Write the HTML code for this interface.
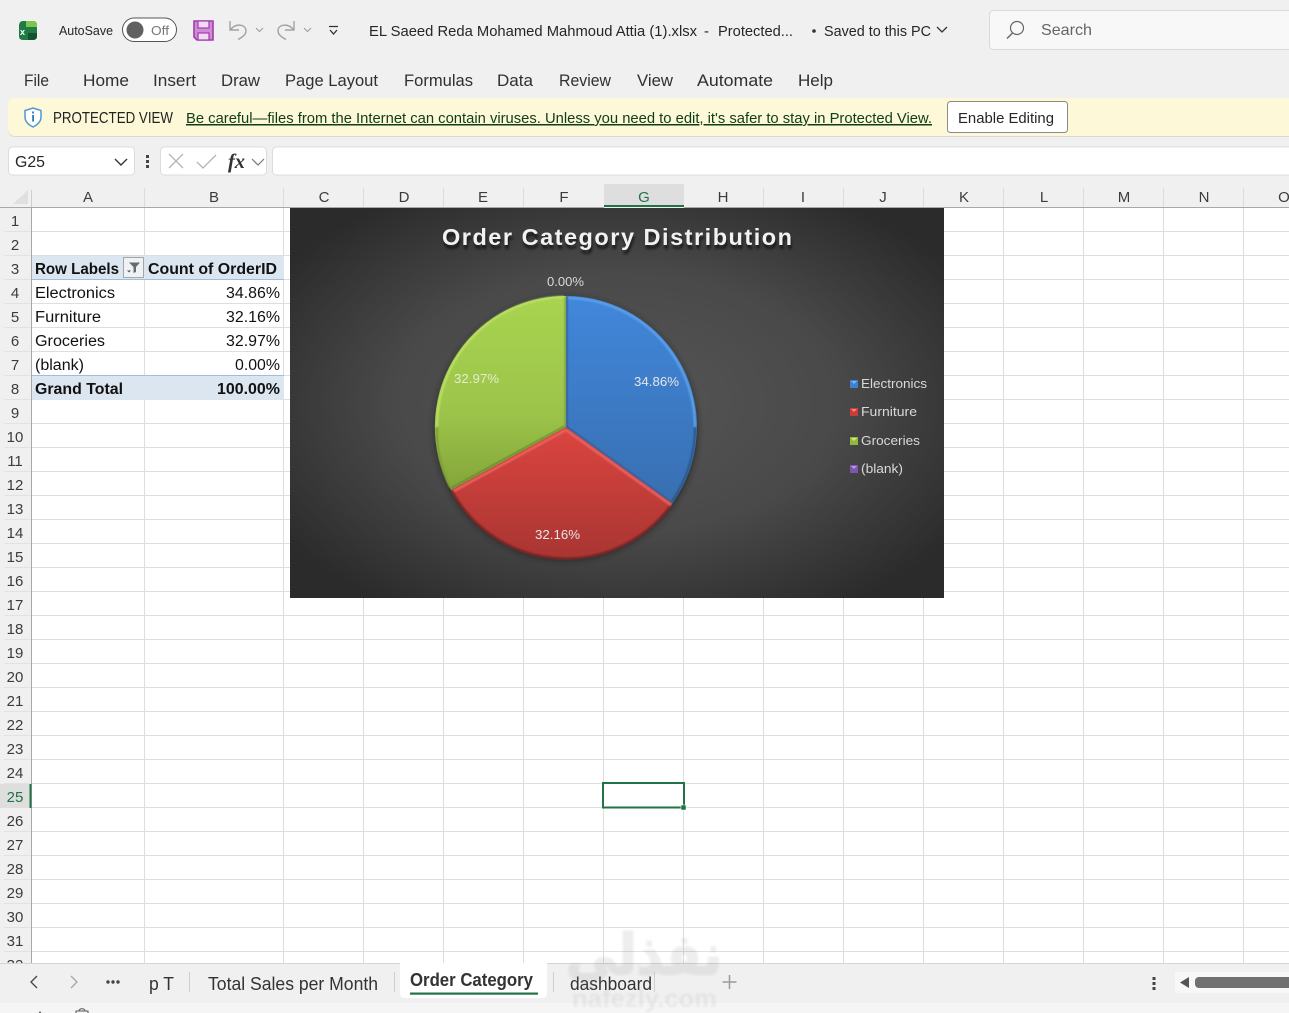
<!DOCTYPE html>
<html><head><meta charset="utf-8"><style>
html,body{margin:0;padding:0;background:#f0f0f0;overflow:hidden}
svg{display:block;position:absolute;left:0;top:0}
text{font-family:"Liberation Sans","DejaVu Sans",sans-serif;fill:#262626}
.m{font-size:17px;fill:#303030}
.c{font-size:15.5px;fill:#111}
.b{font-size:15.5px;font-weight:bold;fill:#111}
.r{font-size:15px;fill:#3c3c3c;text-anchor:middle}
.h{font-size:15px;fill:#3c3c3c;text-anchor:middle}
.t{font-size:13px;fill:#e6e6e6}
.g{stroke:#dedede;stroke-width:1}
</style></head><body>
<svg width="1289" height="1013" viewBox="0 0 1289 1013" xmlns="http://www.w3.org/2000/svg">
<defs>
<radialGradient id="bg" cx="50%" cy="50%" r="62%"><stop offset="0" stop-color="#565656"/><stop offset=".55" stop-color="#494949"/><stop offset="1" stop-color="#2b2b2b"/></radialGradient>
<linearGradient id="bl" x1="0" y1="0" x2="0" y2="1"><stop offset="0" stop-color="#4187dc"/><stop offset="1" stop-color="#386fb0"/></linearGradient>
<linearGradient id="rd" x1="0" y1="0" x2="0" y2="1"><stop offset="0" stop-color="#dc4540"/><stop offset="1" stop-color="#a93532"/></linearGradient>
<linearGradient id="gr" x1="0" y1="0" x2="0" y2="1"><stop offset="0" stop-color="#a8d450"/><stop offset=".6" stop-color="#9cc44a"/><stop offset="1" stop-color="#84a53a"/></linearGradient>
<filter id="sh" x="-20%" y="-20%" width="140%" height="140%"><feGaussianBlur stdDeviation="3"/></filter>
<filter id="ts" x="-5%" y="-30%" width="110%" height="160%"><feGaussianBlur stdDeviation="1.2"/></filter>
<filter id="wb" x="-5%" y="-20%" width="110%" height="140%"><feGaussianBlur stdDeviation="1"/></filter>
<filter id="bv" x="-10%" y="-10%" width="120%" height="120%"><feGaussianBlur stdDeviation=".7"/></filter>
</defs>

<!-- sheet -->
<rect x="0" y="0" width="1289" height="1013" fill="#f0f0f0"/>
<rect x="32" y="208" width="1257" height="755" fill="#fff"/>
<g class="g">
<path d="M32 231.5H1289M32 255.5H1289M32 279.5H1289M32 303.5H1289M32 327.5H1289M32 351.5H1289M32 375.5H1289M32 399.5H1289M32 423.5H1289M32 447.5H1289M32 471.5H1289M32 495.5H1289M32 519.5H1289M32 543.5H1289M32 567.5H1289M32 591.5H1289M32 615.5H1289M32 639.5H1289M32 663.5H1289M32 687.5H1289M32 711.5H1289M32 735.5H1289M32 759.5H1289M32 783.5H1289M32 807.5H1289M32 831.5H1289M32 855.5H1289M32 879.5H1289M32 903.5H1289M32 927.5H1289M32 951.5H1289"/>
<path d="M144.5 208V963M283.5 208V963M363.5 208V963M443.5 208V963M523.5 208V963M603.5 208V963M683.5 208V963M763.5 208V963M843.5 208V963M923.5 208V963M1003.5 208V963M1083.5 208V963M1163.5 208V963M1243.5 208V963"/>
</g>

<!-- col header -->
<rect x="0" y="184" width="1289" height="23" fill="#f0f0f0"/>
<rect x="604" y="184" width="80" height="23" fill="#dedede"/>
<rect x="604" y="205" width="80" height="2" fill="#217346"/>
<path d="M0 207.5H604M684 207.5H1289" stroke="#a8a8a8"/>
<path d="M31.5 190V207" stroke="#cfcfcf"/>
<path d="M31.5 207V963" stroke="#a8a8a8"/>
<path d="M144.5 188V207M283.5 188V207M363.5 188V207M443.5 188V207M523.5 188V207M763.5 188V207M843.5 188V207M923.5 188V207M1003.5 188V207M1083.5 188V207M1163.5 188V207M1243.5 188V207" stroke="#dcdcdc"/>
<path d="M13 204L28 190V204Z" fill="#e0e0e0"/>
<g class="h">
<text class="h" x="88" y="202">A</text><text class="h" x="214" y="202">B</text><text class="h" x="324" y="202">C</text><text class="h" x="404" y="202">D</text><text class="h" x="483" y="202">E</text><text class="h" x="564" y="202">F</text><text class="h" x="644" y="202" style="fill:#217346">G</text><text class="h" x="723" y="202">H</text><text class="h" x="803" y="202">I</text><text class="h" x="883" y="202">J</text><text class="h" x="964" y="202">K</text><text class="h" x="1044" y="202">L</text><text class="h" x="1124" y="202">M</text><text class="h" x="1204" y="202">N</text><text class="h" x="1284" y="202">O</text>
</g>

<!-- row headers -->
<path d="M4 231.5H31M4 255.5H31M4 279.5H31M4 303.5H31M4 327.5H31M4 351.5H31M4 375.5H31M4 399.5H31M4 423.5H31M4 447.5H31M4 471.5H31M4 495.5H31M4 519.5H31M4 543.5H31M4 567.5H31M4 591.5H31M4 615.5H31M4 639.5H31M4 663.5H31M4 687.5H31M4 711.5H31M4 735.5H31M4 759.5H31M4 783.5H31M4 807.5H31M4 831.5H31M4 855.5H31M4 879.5H31M4 903.5H31M4 927.5H31M4 951.5H31" stroke="#e2e2e2"/>
<rect x="0" y="784" width="30" height="24" fill="#dedede"/>
<rect x="29.500" y="784" width="2" height="24" fill="#217346"/>
<text class="r" x="15" y="226">1</text><text class="r" x="15" y="250">2</text><text class="r" x="15" y="274">3</text><text class="r" x="15" y="298">4</text><text class="r" x="15" y="322">5</text><text class="r" x="15" y="346">6</text><text class="r" x="15" y="370">7</text><text class="r" x="15" y="394">8</text><text class="r" x="15" y="418">9</text><text class="r" x="15" y="442">10</text><text class="r" x="15" y="466">11</text><text class="r" x="15" y="490">12</text><text class="r" x="15" y="514">13</text><text class="r" x="15" y="538">14</text><text class="r" x="15" y="562">15</text><text class="r" x="15" y="586">16</text><text class="r" x="15" y="610">17</text><text class="r" x="15" y="634">18</text><text class="r" x="15" y="658">19</text><text class="r" x="15" y="682">20</text><text class="r" x="15" y="706">21</text><text class="r" x="15" y="730">22</text><text class="r" x="15" y="754">23</text><text class="r" x="15" y="778">24</text><text class="r" x="15" y="802" style="fill:#217346">25</text><text class="r" x="15" y="826">26</text><text class="r" x="15" y="850">27</text><text class="r" x="15" y="874">28</text><text class="r" x="15" y="898">29</text><text class="r" x="15" y="922">30</text><text class="r" x="15" y="946">31</text><text class="r" x="15" y="970">32</text>

<!-- pivot -->
<rect x="32" y="256" width="252" height="23" fill="#dce6f1"/>
<path d="M32 279.500H284" stroke="#a3bcd9"/>
<rect x="32" y="376" width="252" height="24" fill="#dce6f1"/>
<path d="M32 375.500H284" stroke="#a3bcd9"/>
<rect x="123.500" y="257.500" width="20" height="20" fill="#eef1f5" stroke="#a6a6a6"/>
<path d="M129 262.500H140L136 267V272L133.500 273V267Z" fill="#6a6a6a"/>
<path d="M127 270.500H131L129 272.500Z" fill="#555"/>
<text class="b" x="35" y="274" textLength="84" lengthAdjust="spacingAndGlyphs">Row Labels</text>
<text class="b" x="148" y="274" textLength="129" lengthAdjust="spacingAndGlyphs">Count of OrderID</text>
<text class="c" x="35" y="298" textLength="80" lengthAdjust="spacingAndGlyphs">Electronics</text>
<text class="c" x="35" y="322" textLength="66" lengthAdjust="spacingAndGlyphs">Furniture</text>
<text class="c" x="35" y="346" textLength="70" lengthAdjust="spacingAndGlyphs">Groceries</text>
<text class="c" x="35" y="370" textLength="49" lengthAdjust="spacingAndGlyphs">(blank)</text>
<text class="b" x="35" y="394" textLength="88" lengthAdjust="spacingAndGlyphs">Grand Total</text>
<text class="c" x="226" y="298" textLength="54" lengthAdjust="spacingAndGlyphs">34.86%</text>
<text class="c" x="226" y="322" textLength="54" lengthAdjust="spacingAndGlyphs">32.16%</text>
<text class="c" x="226" y="346" textLength="54" lengthAdjust="spacingAndGlyphs">32.97%</text>
<text class="c" x="235" y="370" textLength="45" lengthAdjust="spacingAndGlyphs">0.00%</text>
<text class="b" x="217" y="394" textLength="63" lengthAdjust="spacingAndGlyphs">100.00%</text>

<!-- chart -->
<rect x="290" y="208" width="654" height="390" fill="url(#bg)"/>
<text x="442" y="247" font-size="23.500" font-weight="bold" textLength="350" lengthAdjust="spacing" style="fill:#000;opacity:.6" filter="url(#ts)" transform="translate(1 2)">Order Category Distribution</text>
<text x="442" y="245" font-size="23.500" font-weight="bold" textLength="350" lengthAdjust="spacing" style="fill:#f2f2f2">Order Category Distribution</text>
<circle cx="566" cy="429" r="132" fill="#222" opacity=".7" filter="url(#sh)"/>
<path d="M566 427L566 296A131 131 0 0 1 672.6 503Z" fill="url(#bl)"/>
<path d="M566 427L672.6 503A131 131 0 0 1 451 490Z" fill="url(#rd)"/>
<path d="M566 427L451 490A131 131 0 0 1 566 296Z" fill="url(#gr)"/>
<!-- bevels -->
<g filter="url(#bv)">
<path d="M568 298A129 129 0 0 1 695 427" fill="none" stroke="#5b9fe8" stroke-width="2.500"/>
<path d="M695 427A129 129 0 0 1 672 501" fill="none" stroke="#2a5484" stroke-width="2"/>
<path d="M567 296V427L672.600 503" fill="none" stroke="#2e5c93" stroke-width="1.500"/>
<path d="M671 505A130 130 0 0 1 452 491" fill="none" stroke="#7f2725" stroke-width="2.500"/>
<path d="M566 430L671 505M566 430L454 491" fill="none" stroke="#e8625c" stroke-width="2.500"/>
<path d="M564 297A129 129 0 0 0 437 427" fill="none" stroke="#b8df62" stroke-width="2.500"/>
<path d="M437 427A129 129 0 0 0 450 487" fill="none" stroke="#7d9c35" stroke-width="2"/>
<path d="M565 297V426" fill="none" stroke="#7f9f38" stroke-width="1.200"/>
<path d="M451 488L565 426" fill="none" stroke="#5f7c28" stroke-width="1.200"/>
</g>
<text class="t" x="547" y="286" textLength="37" lengthAdjust="spacingAndGlyphs" style="fill:#d9d9d9">0.00%</text>
<text class="t" x="634" y="386" textLength="45" lengthAdjust="spacingAndGlyphs">34.86%</text>
<text class="t" x="535" y="539" textLength="45" lengthAdjust="spacingAndGlyphs">32.16%</text>
<text class="t" x="454" y="383" textLength="45" lengthAdjust="spacingAndGlyphs" style="fill:#e3edcc">32.97%</text>
<rect x="850" y="380" width="8" height="8" fill="#3f80d0"/><path d="M851 381h6l-3 3z" fill="#7fb4ee"/>
<rect x="850" y="408" width="8" height="8" fill="#c93c38"/><path d="M851 409h6l-3 3z" fill="#ee8884"/>
<rect x="850" y="437" width="8" height="8" fill="#93b83f"/><path d="M851 438h6l-3 3z" fill="#cfe68e"/>
<rect x="850" y="465" width="8" height="8" fill="#7b55b0"/><path d="M851 466h6l-3 3z" fill="#b49ad8"/>
<text class="t" x="861" y="388" textLength="66" lengthAdjust="spacingAndGlyphs" style="fill:#d9d9d9">Electronics</text>
<text class="t" x="861" y="416" textLength="56" lengthAdjust="spacingAndGlyphs" style="fill:#d9d9d9">Furniture</text>
<text class="t" x="861" y="445" textLength="59" lengthAdjust="spacingAndGlyphs" style="fill:#d9d9d9">Groceries</text>
<text class="t" x="861" y="473" textLength="42" lengthAdjust="spacingAndGlyphs" style="fill:#d9d9d9">(blank)</text>

<!-- selection -->
<rect x="603" y="783" width="81" height="24.500" fill="none" stroke="#217346" stroke-width="2"/>
<rect x="681" y="805" width="5" height="5" fill="#217346" stroke="#fff" stroke-width=".5"/>

<!-- title bar -->
<path d="M19 26Q19 21 23 21H33Q37 21 37 25V36Q37 40 33 40H23Q19 40 19 36Z" fill="#1f7a45"/>
<path d="M26 21H33Q37 21 37 25V27H26Z" fill="#7bc74d"/>
<path d="M28 33H37V36Q37 40 33 40H28Z" fill="#14522f"/>
<text x="20" y="35" font-size="9" font-weight="bold" style="fill:#fff">x</text>
<text x="59" y="35" font-size="12.500" textLength="54" lengthAdjust="spacingAndGlyphs">AutoSave</text>
<rect x="122.500" y="18" width="54" height="23.500" rx="11.700" fill="#fff" stroke="#555"/>
<circle cx="135" cy="30" r="8.500" fill="#616161"/>
<text x="151" y="35" font-size="13" textLength="18" lengthAdjust="spacingAndGlyphs" style="fill:#777">Off</text>
<path d="M194 21H213V40H197L194 37Z" fill="#cf8bd6" stroke="#a03cad" stroke-width="1.600"/>
<rect x="198" y="21" width="11" height="7" fill="#f1daf3" stroke="#a03cad" stroke-width="1.200"/>
<rect x="198" y="33" width="11" height="7" fill="#f1daf3" stroke="#a03cad" stroke-width="1.200"/>
<path d="M230 21V30H239M230.500 29.500C236 23 246 24 246 31C246 34 243 37 238 39.500" fill="none" stroke="#a2a2a2" stroke-width="1.400"/>
<path d="M256 28L259.500 31.500L263 28" fill="none" stroke="#a2a2a2" stroke-width="1.200"/>
<path d="M294 21V30H285M293.500 29.500C288 23 278 24 278 31C278 34 281 37 286 39.500" fill="none" stroke="#a2a2a2" stroke-width="1.400"/>
<path d="M304 28L307.500 31.500L311 28" fill="none" stroke="#a2a2a2" stroke-width="1.200"/>
<path d="M329 26.500H338M330 30L333.500 34L337 30" fill="none" stroke="#333" stroke-width="1.300"/>
<text x="369" y="36" font-size="15" textLength="328" lengthAdjust="spacingAndGlyphs">EL Saeed Reda Mohamed Mahmoud Attia (1).xlsx</text>
<text x="704" y="36" font-size="15">-</text>
<text x="718" y="36" font-size="15" textLength="75" lengthAdjust="spacingAndGlyphs">Protected...</text>
<circle cx="814" cy="31" r="1.800" fill="#333"/>
<text x="824" y="36" font-size="15" textLength="107" lengthAdjust="spacingAndGlyphs">Saved to this PC</text>
<path d="M937 27L942 32L947 27" fill="none" stroke="#333" stroke-width="1.300"/>
<rect x="989.500" y="10.500" width="320" height="39" rx="4" fill="#f8f8f8" stroke="#d9d9d9"/>
<circle cx="1017" cy="28" r="6.500" fill="none" stroke="#666" stroke-width="1.200"/>
<path d="M1012.500 33L1007 38.500" stroke="#666" stroke-width="1.400"/>
<text x="1041" y="35" font-size="16" textLength="51" lengthAdjust="spacingAndGlyphs" style="fill:#666">Search</text>

<!-- menu -->
<text class="m" x="24" y="86" textLength="25" lengthAdjust="spacingAndGlyphs">File</text>
<text class="m" x="83" y="86" textLength="46" lengthAdjust="spacingAndGlyphs">Home</text>
<text class="m" x="153" y="86" textLength="43" lengthAdjust="spacingAndGlyphs">Insert</text>
<text class="m" x="221" y="86" textLength="39" lengthAdjust="spacingAndGlyphs">Draw</text>
<text class="m" x="285" y="86" textLength="93" lengthAdjust="spacingAndGlyphs">Page Layout</text>
<text class="m" x="404" y="86" textLength="69" lengthAdjust="spacingAndGlyphs">Formulas</text>
<text class="m" x="497" y="86" textLength="36" lengthAdjust="spacingAndGlyphs">Data</text>
<text class="m" x="559" y="86" textLength="52" lengthAdjust="spacingAndGlyphs">Review</text>
<text class="m" x="637" y="86" textLength="36" lengthAdjust="spacingAndGlyphs">View</text>
<text class="m" x="697" y="86" textLength="76" lengthAdjust="spacingAndGlyphs">Automate</text>
<text class="m" x="798" y="86" textLength="35" lengthAdjust="spacingAndGlyphs">Help</text>

<!-- protected bar -->
<rect x="8" y="98" width="1300" height="38" rx="7" fill="#d8d8d8" transform="translate(0 1)"/>
<rect x="8" y="98" width="1300" height="38" rx="7" fill="#fcf8d8"/>
<path d="M33 108L41 110.500V117C41 122 37 125 33 127C29 125 25 122 25 117V110.500Z" fill="#fff" stroke="#4a9bd1" stroke-width="1.500"/>
<rect x="32.200" y="115" width="1.800" height="6.500" fill="#2a78b5"/><rect x="32.200" y="111.500" width="1.800" height="2" fill="#2a78b5"/>
<text x="53" y="123" font-size="16" textLength="120" lengthAdjust="spacingAndGlyphs" style="fill:#222">PROTECTED VIEW</text>
<text x="186" y="123" font-size="15" textLength="746" lengthAdjust="spacingAndGlyphs" text-decoration="underline" style="fill:#0f3d17">Be careful—files from the Internet can contain viruses. Unless you need to edit, it's safer to stay in Protected View.</text>
<rect x="947.500" y="101.500" width="120" height="31" rx="3" fill="#fff" stroke="#8a8a8a"/>
<text x="958" y="123" font-size="15" textLength="96" lengthAdjust="spacingAndGlyphs">Enable Editing</text>

<!-- formula bar -->
<rect x="8.500" y="147" width="126" height="28" rx="4" fill="#fff" stroke="#dcdcdc"/>
<text x="15" y="167" font-size="16" textLength="30" lengthAdjust="spacingAndGlyphs">G25</text>
<path d="M115 159L121 165L127 159" fill="none" stroke="#333" stroke-width="1.400"/>
<rect x="146" y="155" width="3" height="3" fill="#444"/><rect x="146" y="160" width="3" height="3" fill="#444"/><rect x="146" y="165" width="3" height="3" fill="#444"/>
<rect x="160.500" y="147" width="106" height="28" rx="4" fill="#fff" stroke="#dcdcdc"/>
<path d="M169 154L183 168M183 154L169 168" stroke="#b5b5b5" stroke-width="1.300"/>
<path d="M197 162L203 168L216 155" fill="none" stroke="#b5b5b5" stroke-width="1.300"/>
<text x="228" y="168" font-size="21" font-style="italic" font-weight="bold" style="font-family:'Liberation Serif',serif;fill:#333" textLength="17" lengthAdjust="spacingAndGlyphs">fx</text>
<path d="M252 159L258 165L264 159" fill="none" stroke="#777" stroke-width="1.200"/>
<rect x="272.500" y="147" width="1030" height="28" rx="4" fill="#fff" stroke="#dcdcdc"/>

<!-- tab bar -->
<rect x="0" y="963" width="1289" height="40" fill="#f0f0f0"/>
<path d="M0 963.500H1289" stroke="#d4d4d4"/>
<rect x="0" y="1003" width="1289" height="10" fill="#f5f5f5"/>
<path d="M37 976L31 982L37 988" fill="none" stroke="#444" stroke-width="1.300"/>
<path d="M71 976L77 982L71 988" fill="none" stroke="#a5a5a5" stroke-width="1.300"/>
<circle cx="108" cy="982" r="1.700" fill="#444"/><circle cx="113" cy="982" r="1.700" fill="#444"/><circle cx="118" cy="982" r="1.700" fill="#444"/>
<text x="149" y="990" font-size="18" textLength="25" lengthAdjust="spacingAndGlyphs" style="fill:#333">p T</text>
<path d="M189.500 972V992M394.500 972V992M553.500 972V992M654.500 972V992" stroke="#cfcfcf"/>
<text x="208" y="990" font-size="18" textLength="170" lengthAdjust="spacingAndGlyphs" style="fill:#333">Total Sales per Month</text>
<path d="M400 963H547V993Q547 998 542 998H405Q400 998 400 993Z" fill="#fff"/>
<text x="410" y="986" font-size="18" font-weight="bold" textLength="123" lengthAdjust="spacingAndGlyphs" style="fill:#333">Order Category</text>
<rect x="410" y="992.500" width="128" height="2.200" fill="#217346"/>
<text x="570" y="990" font-size="18" textLength="82" lengthAdjust="spacingAndGlyphs" style="fill:#333">dashboard</text>
<path d="M729.500 975V989M722.500 982H736.500" stroke="#9a9a9a" stroke-width="1.500"/>
<rect x="1152.500" y="977" width="3" height="3" fill="#444"/><rect x="1152.500" y="982" width="3" height="3" fill="#444"/><rect x="1152.500" y="987" width="3" height="3" fill="#444"/>
<rect x="1175" y="972" width="120" height="21" fill="#f7f7f7"/>
<path d="M1189 977V988L1180 982.500Z" fill="#555"/>
<rect x="1195" y="977" width="110" height="11" rx="4" fill="#707070"/>

<!-- watermark -->
<text x="566" y="974" font-size="56" font-weight="bold" textLength="156" lengthAdjust="spacingAndGlyphs" stroke="#8a8a8a" stroke-width="2" style="font-family:'DejaVu Sans',sans-serif;fill:#8a8a8a;opacity:.14" filter="url(#wb)">نفذلي</text>
<text x="572" y="1007" font-size="25" font-weight="bold" textLength="145" lengthAdjust="spacingAndGlyphs" style="fill:#8a8a8a;opacity:.12" filter="url(#wb)">nafezly.com</text>

<!-- status fragments -->
<circle cx="40" cy="1012.500" r="1" fill="#555"/>
<path d="M76 1013V1011H88V1013M79 1011C79 1008 85 1008 85 1011" fill="none" stroke="#555"/>
</svg>
</body></html>
